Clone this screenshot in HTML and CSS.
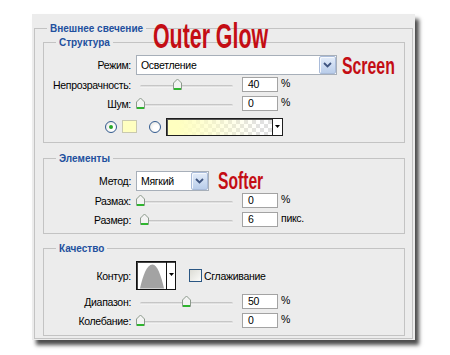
FILE: index.html
```html
<!DOCTYPE html>
<html lang="ru">
<head>
<meta charset="utf-8">
<title>Внешнее свечение</title>
<link rel="stylesheet" href="styles.css">
</head>
<body>
<div class="page">
  <div class="panel">
    <fieldset class="outer">
      <legend>Внешнее свечение</legend>

      <fieldset class="group g1">
        <legend>Структура</legend>
        <div class="rows">
          <span class="lbl">Режим:</span>
          <div class="ctl r20">
            <div class="select sel-wide">
              <span class="val">Осветление</span>
              <span class="btn"><svg width="9" height="6" viewBox="0 0 9 6"><path d="M1 1 L4.5 4.5 L8 1" fill="none" stroke="#3f5580" stroke-width="1.8"/></svg></span>
            </div>
          </div>

          <span class="lbl">Непрозрачность:</span>
          <div class="ctl r19">
            <div class="slider"><div class="track"></div>
              <svg class="thumb" style="left:35.7px" width="11" height="13" viewBox="0 0 11 13"><path d="M1.5 5 L5.5 1 L9.5 5 V11.5 H1.5 Z" fill="#f3f3f3" stroke="#8c9a8c"/><rect x="2" y="10" width="7" height="2" fill="#2fb52f"/></svg>
            </div>
            <span class="num">40</span><span class="unit">%</span>
          </div>

          <span class="lbl">Шум:</span>
          <div class="ctl r19">
            <div class="slider"><div class="track"></div>
              <svg class="thumb" style="left:-1.5px" width="11" height="13" viewBox="0 0 11 13"><path d="M1.5 5 L5.5 1 L9.5 5 V11.5 H1.5 Z" fill="#f3f3f3" stroke="#8c9a8c"/><rect x="2" y="10" width="7" height="2" fill="#2fb52f"/></svg>
            </div>
            <span class="num">0</span><span class="unit">%</span>
          </div>
        </div>

        <div class="color-row">
          <span class="radio checked"></span>
          <span class="swatch"></span>
          <span class="radio"></span>
          <div class="grad">
            <span class="grad-fill"></span>
            <span class="gbtn"><svg width="5" height="3" viewBox="0 0 5 3"><path d="M0 0 H5 L2.5 3 Z" fill="#000"/></svg></span>
          </div>
        </div>
      </fieldset>

      <fieldset class="group g2">
        <legend>Элементы</legend>
        <div class="rows">
          <span class="lbl">Метод:</span>
          <div class="ctl r20">
            <div class="select sel-short">
              <span class="val">Мягкий</span>
              <span class="btn"><svg width="9" height="6" viewBox="0 0 9 6"><path d="M1 1 L4.5 4.5 L8 1" fill="none" stroke="#3f5580" stroke-width="1.8"/></svg></span>
            </div>
          </div>

          <span class="lbl">Размах:</span>
          <div class="ctl r19">
            <div class="slider"><div class="track"></div>
              <svg class="thumb" style="left:-1.5px" width="11" height="13" viewBox="0 0 11 13"><path d="M1.5 5 L5.5 1 L9.5 5 V11.5 H1.5 Z" fill="#f3f3f3" stroke="#8c9a8c"/><rect x="2" y="10" width="7" height="2" fill="#2fb52f"/></svg>
            </div>
            <span class="num">0</span><span class="unit">%</span>
          </div>

          <span class="lbl">Размер:</span>
          <div class="ctl r19">
            <div class="slider"><div class="track"></div>
              <svg class="thumb" style="left:3px" width="11" height="13" viewBox="0 0 11 13"><path d="M1.5 5 L5.5 1 L9.5 5 V11.5 H1.5 Z" fill="#f3f3f3" stroke="#8c9a8c"/><rect x="2" y="10" width="7" height="2" fill="#2fb52f"/></svg>
            </div>
            <span class="num">6</span><span class="unit">пикс.</span>
          </div>
        </div>
      </fieldset>

      <fieldset class="group g3">
        <legend>Качество</legend>
        <div class="rows">
          <span class="lbl">Контур:</span>
          <div class="ctl r29">
            <div class="contour">
              <span class="curve"><svg width="29" height="27" viewBox="0 0 29 27"><path d="M2 27 C5 14 9 2 15 2 C20 2 24 14 27 27 Z" fill="#a3a3a3"/></svg></span>
              <span class="cbtn"><svg width="5" height="3" viewBox="0 0 5 3"><path d="M0 0 H5 L2.5 3 Z" fill="#000"/></svg></span>
            </div>
            <span class="check"></span><span class="check-lbl">Сглаживание</span>
          </div>

          <span class="lbl lbl-gap">Диапазон:</span>
          <div class="ctl r19 lbl-gap">
            <div class="slider"><div class="track"></div>
              <svg class="thumb" style="left:45px" width="11" height="13" viewBox="0 0 11 13"><path d="M1.5 5 L5.5 1 L9.5 5 V11.5 H1.5 Z" fill="#f3f3f3" stroke="#8c9a8c"/><rect x="2" y="10" width="7" height="2" fill="#2fb52f"/></svg>
            </div>
            <span class="num">50</span><span class="unit">%</span>
          </div>

          <span class="lbl">Колебание:</span>
          <div class="ctl r19">
            <div class="slider"><div class="track"></div>
              <svg class="thumb" style="left:-1.5px" width="11" height="13" viewBox="0 0 11 13"><path d="M1.5 5 L5.5 1 L9.5 5 V11.5 H1.5 Z" fill="#f3f3f3" stroke="#8c9a8c"/><rect x="2" y="10" width="7" height="2" fill="#2fb52f"/></svg>
            </div>
            <span class="num">0</span><span class="unit">%</span>
          </div>
        </div>
      </fieldset>
    </fieldset>
  </div>

  <span class="note note-glow">Outer Glow</span>
  <span class="note note-screen">Screen</span>
  <span class="note note-softer">Softer</span>
</div>
</body>
</html>
```

FILE: styles.css
```css
* { box-sizing: border-box; }

html, body {
  margin: 0;
  background: #ffffff;
}

body {
  font-family: "Liberation Sans", Arial, sans-serif;
  font-size: 10.5px;
  letter-spacing: -0.3px;
  color: #000;
}

.page {
  position: relative;
  width: 450px;
  height: 355px;
  padding: 14px 0 0 32px;
}

.panel {
  width: 383px;
  background: #ececec;
  padding: 8px 2px 1px 2px;
  box-shadow: 4px 5px 4px rgba(0, 0, 0, 0.7);
}

fieldset {
  margin: 0;
  padding: 0;
  min-width: 0;
  border: 1px solid #c3c3c3;
}

legend {
  margin-left: 12px;
  padding: 0 3px;
  font-size: 10px;
  line-height: 13px;
  letter-spacing: 0;
  font-weight: bold;
  color: #22509e;
}

.outer {
  width: 379px;
  padding-bottom: 2px;
}

.group {
  width: 362px;
  margin-left: 8px;
}

.g1 { margin-top: 1px; padding-bottom: 6px; }
.g2 { margin-top: 9px; padding-bottom: 4px; }
.g3 { margin-top: 8px; padding-bottom: 5px; }

.rows {
  display: grid;
  grid-template-columns: 87px 1fr;
  column-gap: 5px;
  align-items: center;
  padding-top: 6px;
}

.lbl {
  text-align: right;
  white-space: nowrap;
}

.lbl-gap { margin-top: 2px; }

.ctl {
  display: flex;
  align-items: center;
}

.r19 { height: 19px; }
.r20 { height: 20px; }
.r29 { height: 29px; }

/* select */
.select {
  display: flex;
  height: 20px;
  border: 1px solid #a7afb9;
  background: #fff;
}
.sel-wide { width: 201px; }
.sel-short { width: 73px; }
.select .val {
  flex: 1;
  padding-left: 4px;
  line-height: 18px;
}
.select .btn {
  width: 17px;
  height: 18px;
  display: flex;
  align-items: center;
  justify-content: center;
  border: 1px solid #a9bbd9;
  border-radius: 2px;
  background: linear-gradient(#e3ecf9, #b9cdea);
  box-shadow: inset 1px 1px 0 #f5f8fd;
}

/* slider */
.slider {
  position: relative;
  width: 106px;
  height: 19px;
  padding: 10px 9px 0 4px;
}
.track {
  width: 93px;
  height: 3px;
  border-radius: 2px;
  background: linear-gradient(#b8b8b8, #e9e9e9 60%, #f8f8f8);
}
.thumb {
  position: absolute;
  top: 3px;
}

.num {
  width: 36px;
  height: 15px;
  border: 1px solid #a3a3a3;
  background: #fff;
  padding-left: 5px;
  line-height: 13px;
}
.unit {
  margin-left: 3px;
  margin-bottom: 3px;
}

/* colour row */
.color-row {
  display: flex;
  align-items: center;
  height: 19px;
  margin-top: 4px;
  padding-left: 61px;
}
.radio {
  width: 12px;
  height: 12px;
  border-radius: 50%;
  border: 1px solid #335b8f;
  background: radial-gradient(circle at 60% 60%, #fff 30%, #dcdcd6);
  display: flex;
  align-items: center;
  justify-content: center;
}
.radio.checked::after {
  content: "";
  width: 4px;
  height: 4px;
  border-radius: 50%;
  background: #27a827;
}
.swatch {
  width: 15px;
  height: 13px;
  margin-left: 5px;
  border: 1px solid #c9c9b0;
  background: #ffffc0;
}
.swatch + .radio { margin-left: 12px; }
.grad {
  display: flex;
  width: 117px;
  height: 18px;
  margin-left: 5px;
  border: 1px solid #1e1e1e;
  box-shadow: inset 1px 1px 0 #555;
  background: #fff;
}
.grad-fill {
  flex: 1;
  margin: 1px 0 0 1px;
  background-image:
    linear-gradient(to right, #ffffc0 10%, rgba(255, 255, 192, 0) 90%),
    linear-gradient(45deg, #e1e1e1 25%, transparent 25%, transparent 75%, #e1e1e1 75%),
    linear-gradient(45deg, #e1e1e1 25%, transparent 25%, transparent 75%, #e1e1e1 75%);
  background-size: 100% 100%, 8px 8px, 8px 8px;
  background-position: 0 0, 0 0, 4px 4px;
  background-color: #fff;
}
.gbtn {
  width: 10px;
  border-left: 1px solid #1e1e1e;
  background: #fff;
  display: flex;
  align-items: center;
  justify-content: center;
}

/* contour */
.contour {
  display: flex;
  width: 40px;
  height: 29px;
  border: 1px solid #111;
  box-shadow: inset 1px 1px 0 #444;
  background: #fff;
}
.curve {
  width: 29px;
  display: flex;
  align-items: flex-end;
  padding-left: 1px;
}
.cbtn {
  width: 10px;
  border-left: 1px solid #111;
  display: flex;
  align-items: flex-start;
  justify-content: center;
  padding-top: 11px;
}
.check {
  width: 13px;
  height: 13px;
  margin-left: 13px;
  border: 1px solid #2a5683;
  background: linear-gradient(135deg, #dcdcd5, #fbfbf9);
}
.check-lbl {
  margin-left: 2px;
}

/* red annotations laid over the dialog */
.note {
  position: absolute;
  color: #c40d14;
  font-family: "Liberation Sans", Arial, sans-serif;
  font-weight: bold;
  letter-spacing: 0;
  line-height: 1;
  white-space: nowrap;
  transform-origin: 0 0;
}
.note-glow {
  left: 153px;
  top: 18px;
  font-size: 35px;
  transform: scaleX(0.61);
}
.note-screen {
  left: 342px;
  top: 54px;
  font-size: 24px;
  transform: scaleX(0.66);
}
.note-softer {
  left: 218px;
  top: 170px;
  font-size: 23px;
  transform: scaleX(0.68);
}
```
